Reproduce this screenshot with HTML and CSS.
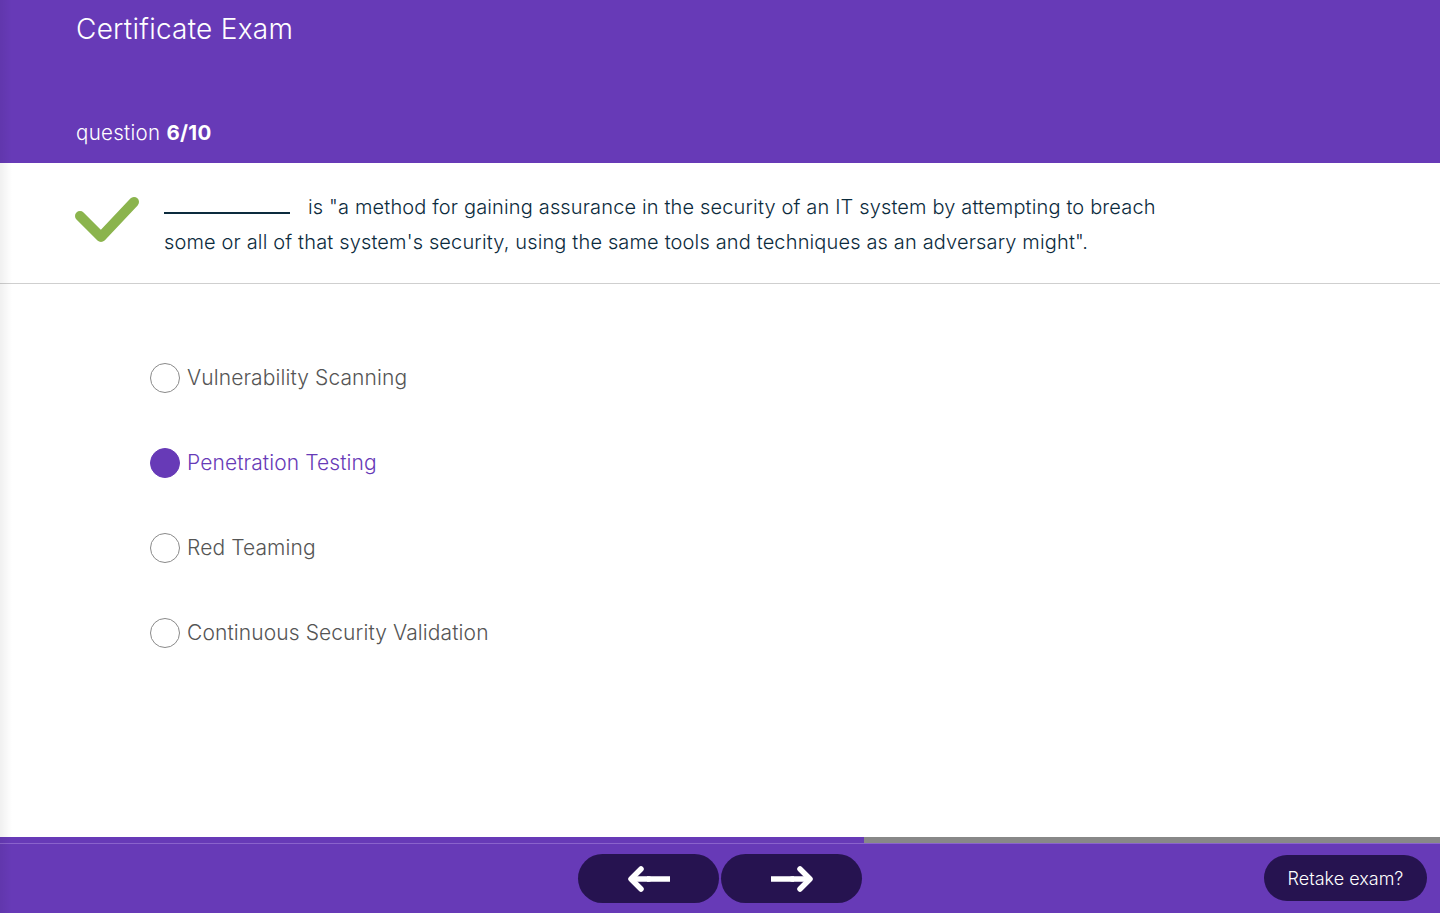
FILE: index.html
```html
<!DOCTYPE html>
<html lang="en">
<head>
<meta charset="utf-8">
<title>Certificate Exam</title>
<link rel="stylesheet" href="styles.css">
</head>
<body>
<div class="page">
  <header class="header">
    <h1 class="title">Certificate Exam</h1>
    <div class="counter">question <b>6/10</b></div>
  </header>

  <section class="question">
    <svg class="check" width="64" height="50" viewBox="0 0 64 50">
      <path d="M5 20 L26 41 L59 6" fill="none" stroke="#8bb44d" stroke-width="10" stroke-linecap="round" stroke-linejoin="round"/>
    </svg>
    <p class="qtext"><span class="blank"></span>is "a method for gaining assurance in the security of an IT system by attempting to breach some or all of that system's security, using the same tools and techniques as an adversary might".</p>
  </section>

  <main class="options">
    <label class="option"><span class="radio"></span><span class="label">Vulnerability Scanning</span></label>
    <label class="option selected"><span class="radio"></span><span class="label">Penetration Testing</span></label>
    <label class="option"><span class="radio"></span><span class="label">Red Teaming</span></label>
    <label class="option"><span class="radio"></span><span class="label">Continuous Security Validation</span></label>
  </main>

  <div class="progress"><div class="progress-fill" style="width:864px"></div></div>

  <footer class="footer">
    <div class="nav">
      <button class="navbtn" aria-label="Previous">
        <svg width="44" height="28" viewBox="0 0 44 28">
          <path d="M20 14 H43" stroke="#fff" stroke-width="5.5" fill="none"/>
          <path d="M14 4 L4 14 L14 24" stroke="#fff" stroke-width="5.5" fill="none" stroke-linecap="round" stroke-linejoin="round"/>
          <path d="M6 14 H22" stroke="#fff" stroke-width="5.5" fill="none" stroke-linecap="round"/>
        </svg>
      </button>
      <button class="navbtn" aria-label="Next">
        <svg width="44" height="28" viewBox="0 0 44 28">
          <path d="M1 14 H24" stroke="#fff" stroke-width="5.5" fill="none"/>
          <path d="M30 4 L40 14 L30 24" stroke="#fff" stroke-width="5.5" fill="none" stroke-linecap="round" stroke-linejoin="round"/>
          <path d="M22 14 H38" stroke="#fff" stroke-width="5.5" fill="none" stroke-linecap="round"/>
        </svg>
      </button>
    </div>
    <button class="retake">Retake exam?</button>
  </footer>
</div>
</body>
</html>
```

FILE: styles.css
```css
* { box-sizing: border-box; }
html, body { margin: 0; padding: 0; }
body {
  font-family: Inter, "Noto Sans", sans-serif;
  background: #fff;
  width: 1440px;
  height: 913px;
  overflow: hidden;
}
.page {
  position: relative;
  display: flex;
  flex-direction: column;
  height: 913px;
}
.page::before {
  content: "";
  position: absolute;
  left: 0; top: 0; bottom: 0;
  width: 12px;
  background: linear-gradient(to right, rgba(0,0,0,0.06), rgba(0,0,0,0));
  pointer-events: none;
  z-index: 5;
}
.header {
  background: #673ab7;
  height: 163px;
  padding: 10px 0 0 76px;
  color: #fff;
}
.title {
  margin: 0;
  font-size: 28px;
  font-weight: 300;
  letter-spacing: 0.25px;
  line-height: 38px;
}
.counter {
  margin-top: 71px;
  font-size: 20.5px;
  font-weight: 300;
  letter-spacing: 0.3px;
  line-height: 28px;
}
.counter b { font-weight: 700; }

.question {
  display: flex;
  align-items: flex-start;
  padding: 27px 0 23px 75px;
  border-bottom: 1px solid #cfcfcf;
}
.check { flex: none; margin-top: 6px; }
.qtext {
  margin: 0 0 0 25px;
  width: 1010px;
  font-size: 20px;
  font-weight: 300;
  letter-spacing: 0.15px;
  line-height: 35px;
  color: #0c2b3d;
}
.blank {
  display: inline-block;
  width: 126px;
  height: 0;
  border-bottom: 2px solid #0c2b3d;
  margin-right: 18px;
  vertical-align: baseline;
}

.options {
  flex: 1;
  display: flex;
  flex-direction: column;
  padding: 51px 0 0 150px;
}
.option {
  display: flex;
  align-items: center;
  height: 85px;
  gap: 7px;
  font-size: 21px;
  font-weight: 300;
  letter-spacing: 0.1px;
  color: #555;
}
.radio {
  width: 30px;
  height: 30px;
  border-radius: 50%;
  border: 1.5px solid #8a8a8a;
  background: #fff;
}
.option.selected { color: #673ab7; }
.option.selected .radio { background: #673ab7; border-color: #673ab7; }

.progress {
  height: 7px;
  background: #888;
  border-bottom: 1px solid #8a63cc;
}
.progress-fill {
  height: 6px;
  background: #673ab7;
}

.footer {
  position: relative;
  height: 69px;
  background: #673ab7;
  display: flex;
  align-items: center;
  justify-content: center;
}
.nav {
  display: flex;
  gap: 2px;
}
.navbtn {
  width: 141px;
  height: 49px;
  border: none;
  border-radius: 25px;
  background: #261350;
  display: flex;
  align-items: center;
  justify-content: center;
  padding: 0;
}
.retake {
  position: absolute;
  right: 13px;
  top: 11px;
  width: 163px;
  height: 46px;
  border: none;
  border-radius: 23px;
  background: #261350;
  color: #fff;
  font-family: Inter, "Noto Sans", sans-serif;
  font-size: 18px;
  font-weight: 300;
}
```
